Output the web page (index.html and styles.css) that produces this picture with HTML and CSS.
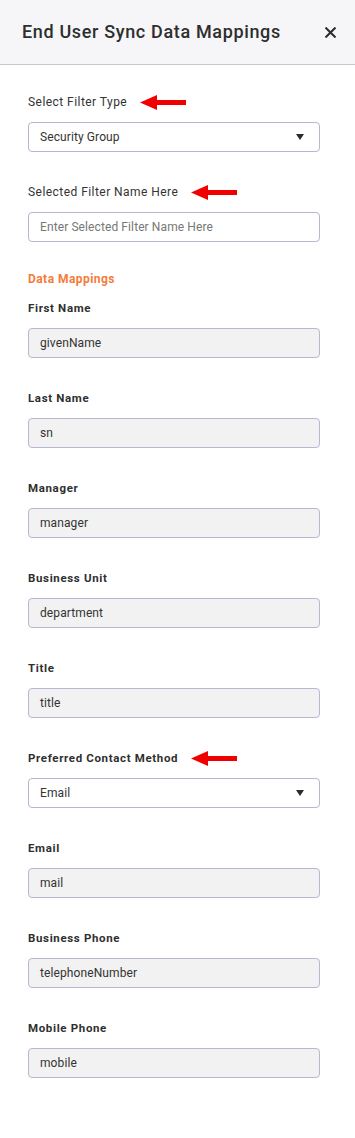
FILE: index.html
```html
<!DOCTYPE html>
<html>
<head>
<meta charset="utf-8">
<link rel="stylesheet" href="styles.css">
</head>
<body>
<div class="panel">
  <header class="header">
    <h1 class="title">End User Sync Data Mappings</h1>
    <svg class="close" width="11" height="11" viewBox="0 0 11 11"><path d="M1.2 1.2 L9.8 9.8 M9.8 1.2 L1.2 9.8" stroke="#2b2b2b" stroke-width="2" stroke-linecap="square"/></svg>
  </header>
  <main class="body">
    <div class="field">
      <div class="label-row"><span class="label plain">Select Filter Type</span><svg class="arrow" width="46" height="15" viewBox="0 0 46 15"><polygon points="0,7.5 17,0 17,5 46,5 46,10 17,10 17,15" fill="#f00000"/></svg></div>
      <div class="box select"><span>Security Group</span><span class="caret"></span></div>
    </div>
    <div class="field">
      <div class="label-row"><span class="label plain">Selected Filter Name Here</span><svg class="arrow" width="46" height="15" viewBox="0 0 46 15"><polygon points="0,7.5 17,0 17,5 46,5 46,10 17,10 17,15" fill="#f00000"/></svg></div>
      <div class="box"><span class="placeholder">Enter Selected Filter Name Here</span></div>
    </div>
    <div class="section">Data Mappings</div>
    <div class="field">
      <div class="label-row"><span class="label">First Name</span></div>
      <div class="box ro">givenName</div>
    </div>
    <div class="field">
      <div class="label-row"><span class="label">Last Name</span></div>
      <div class="box ro">sn</div>
    </div>
    <div class="field">
      <div class="label-row"><span class="label">Manager</span></div>
      <div class="box ro">manager</div>
    </div>
    <div class="field">
      <div class="label-row"><span class="label">Business Unit</span></div>
      <div class="box ro">department</div>
    </div>
    <div class="field">
      <div class="label-row"><span class="label">Title</span></div>
      <div class="box ro">title</div>
    </div>
    <div class="field">
      <div class="label-row"><span class="label">Preferred Contact Method</span><svg class="arrow" width="46" height="15" viewBox="0 0 46 15"><polygon points="0,7.5 17,0 17,5 46,5 46,10 17,10 17,15" fill="#f00000"/></svg></div>
      <div class="box select"><span>Email</span><span class="caret"></span></div>
    </div>
    <div class="field">
      <div class="label-row"><span class="label">Email</span></div>
      <div class="box ro">mail</div>
    </div>
    <div class="field">
      <div class="label-row"><span class="label">Business Phone</span></div>
      <div class="box ro">telephoneNumber</div>
    </div>
    <div class="field">
      <div class="label-row"><span class="label">Mobile Phone</span></div>
      <div class="box ro">mobile</div>
    </div>
  </main>
</div>
</body>
</html>
```
FILE: styles.css
```css
* { box-sizing: border-box; }
html, body { margin: 0; padding: 0; background: #ffffff; }
body { font-family: Roboto, "Noto Sans", "Liberation Sans", sans-serif; color: #333; }
.panel { width: 355px; min-height: 1138px; background: #fff; }
.header {
  height: 65px;
  background: #f6f6f8;
  border-bottom: 1px solid #c9c7d1;
  display: flex;
  align-items: center;
  justify-content: space-between;
  padding: 0 19px 2px 22px;
}
.title {
  margin: 0;
  font-size: 18px;
  font-weight: 500;
  letter-spacing: 0.65px;
  color: #2e2e2e;
}
.close { display: block; margin-top: 2px; }
.body { padding: 17px 35px 0 28px; }
.field { height: 90px; }
.label-row { height: 40px; display: flex; align-items: center; gap: 13px; }
.label { font-size: 11.5px; font-weight: 700; letter-spacing: 0.65px; color: #2f2f2f; }
.label.plain { font-size: 12px; font-weight: 400; letter-spacing: 0.45px; color: #333; }
.arrow { display: block; flex: none; }
.box {
  height: 30px;
  border: 1px solid #bab5d2;
  border-radius: 4px;
  display: flex;
  align-items: center;
  padding: 0 11px;
  font-size: 12px;
  color: #333;
  letter-spacing: 0.1px;
}
.box.ro { background: #f2f2f2; }
.select { justify-content: space-between; padding-right: 15px; }
.caret {
  width: 0; height: 0;
  border-left: 4px solid transparent;
  border-right: 4px solid transparent;
  border-top: 6px solid #2b2b2b;
}
.placeholder { color: #777; }
.section {
  font-size: 12px;
  font-weight: 700;
  color: #f47b3a;
  letter-spacing: 0.45px;
  line-height: 14px;
  padding: 10px 0 2px;
}
```
